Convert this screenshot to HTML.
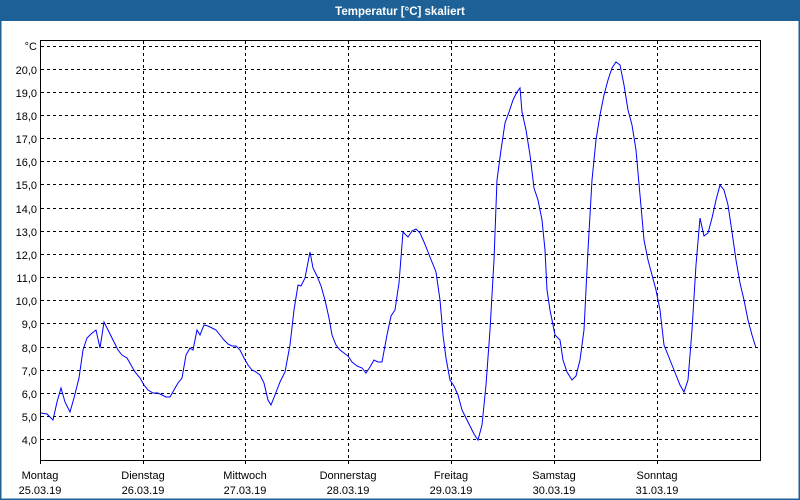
<!DOCTYPE html>
<html><head><meta charset="utf-8"><style>
body{margin:0;width:800px;height:500px;overflow:hidden;background:#fff;font-family:"Liberation Sans",sans-serif}
</style></head><body>
<svg width="800" height="500" xmlns="http://www.w3.org/2000/svg" style="display:block">
<rect x="0" y="0" width="800" height="500" fill="#fff"/>
<rect x="0" y="0" width="800" height="21" fill="#1d6196"/>
<rect x="0" y="0" width="1.5" height="500" fill="#1d6196"/>
<rect x="798.5" y="0" width="1.5" height="500" fill="#1d6196"/>
<rect x="0" y="498.5" width="800" height="1.5" fill="#1d6196"/>
<text x="400" y="15" fill="#fff" font-size="11.5" font-weight="bold" text-anchor="middle">Temperatur [°C] skaliert</text>
<g stroke="#000" stroke-width="1" stroke-dasharray="3,3" shape-rendering="crispEdges">
<line x1="41" x2="760" y1="46.5" y2="46.5"/>
<line x1="41" x2="760" y1="69.5" y2="69.5"/>
<line x1="41" x2="760" y1="92.5" y2="92.5"/>
<line x1="41" x2="760" y1="115.5" y2="115.5"/>
<line x1="41" x2="760" y1="138.5" y2="138.5"/>
<line x1="41" x2="760" y1="161.5" y2="161.5"/>
<line x1="41" x2="760" y1="184.5" y2="184.5"/>
<line x1="41" x2="760" y1="208.5" y2="208.5"/>
<line x1="41" x2="760" y1="231.5" y2="231.5"/>
<line x1="41" x2="760" y1="254.5" y2="254.5"/>
<line x1="41" x2="760" y1="277.5" y2="277.5"/>
<line x1="41" x2="760" y1="300.5" y2="300.5"/>
<line x1="41" x2="760" y1="323.5" y2="323.5"/>
<line x1="41" x2="760" y1="347.5" y2="347.5"/>
<line x1="41" x2="760" y1="370.5" y2="370.5"/>
<line x1="41" x2="760" y1="393.5" y2="393.5"/>
<line x1="41" x2="760" y1="416.5" y2="416.5"/>
<line x1="41" x2="760" y1="439.5" y2="439.5"/>
<line y1="41" y2="464" x1="143.5" x2="143.5"/>
<line y1="41" y2="464" x1="245.5" x2="245.5"/>
<line y1="41" y2="464" x1="348.5" x2="348.5"/>
<line y1="41" y2="464" x1="451.5" x2="451.5"/>
<line y1="41" y2="464" x1="554.5" x2="554.5"/>
<line y1="41" y2="464" x1="657.5" x2="657.5"/>
</g>
<rect x="40.5" y="40.5" width="720" height="420" fill="none" stroke="#000" shape-rendering="crispEdges"/>
<line x1="40.5" x2="40.5" y1="460" y2="464" stroke="#000" shape-rendering="crispEdges"/>
<g font-size="11" fill="#000" text-anchor="end">
<text x="37" y="50">°C</text>
<text x="37" y="74">20,0</text><text x="37" y="97">19,0</text><text x="37" y="120">18,0</text>
<text x="37" y="143">17,0</text><text x="37" y="166">16,0</text><text x="37" y="189">15,0</text>
<text x="37" y="213">14,0</text><text x="37" y="236">13,0</text><text x="37" y="259">12,0</text>
<text x="37" y="282">11,0</text><text x="37" y="305">10,0</text><text x="37" y="328">9,0</text>
<text x="37" y="352">8,0</text><text x="37" y="375">7,0</text><text x="37" y="398">6,0</text>
<text x="37" y="421">5,0</text><text x="37" y="444">4,0</text>
</g>
<g font-size="11" fill="#000" text-anchor="middle">
<text x="40" y="479">Montag</text><text x="40" y="494">25.03.19</text>
<text x="143" y="479">Dienstag</text><text x="143" y="494">26.03.19</text>
<text x="245" y="479">Mittwoch</text><text x="245" y="494">27.03.19</text>
<text x="348" y="479">Donnerstag</text><text x="348" y="494">28.03.19</text>
<text x="451" y="479">Freitag</text><text x="451" y="494">29.03.19</text>
<text x="554" y="479">Samstag</text><text x="554" y="494">30.03.19</text>
<text x="657" y="479">Sonntag</text><text x="657" y="494">31.03.19</text>
</g>
<polyline fill="none" stroke="#0000ff" stroke-width="1" points="41,413 47,414 53,420 57,402 61,388 65,402 70,412 74,398 79,378 83,350 87,338 91,334 96,330 100,348 104,322 108,330 113,340 118,350 122,355 127,358 131,365 135,372 140,378 144,385 148,390 153,393 158,393 162,395 166,397 170,397 174,390 178,383 182,378 186,355 190,348 193,350 197,330 200,335 204,325 208,326 212,328 216,330 220,335 224,340 228,344 232,346 236,346 240,350 244,358 248,365 252,370 256,372 260,375 264,383 268,400 271,405 275,395 280,382 285,372 290,345 294,310 298,285 301,286 305,278 310,252 313,268 317,276 321,286 325,300 329,318 332,335 336,345 340,350 344,353 348,356 352,362 357,366 362,368 366,373 370,367 374,360 378,362 382,362 387,335 391,316 395,310 399,283 403,232 408,237 412,231 416,229 420,233 424,242 428,252 432,262 436,272 440,300 443,335 446,358 450,380 454,386 458,395 462,410 466,418 470,426 474,434 478,440 482,425 486,385 490,330 494,260 497,180 501,150 505,123 509,112 513,100 517,92 520,88 522,112 526,130 530,155 534,188 538,200 542,220 545,250 547,290 550,310 555,335 560,340 563,360 567,372 572,380 576,376 580,360 584,330 588,250 592,180 596,140 600,115 604,95 608,80 612,68 616,62 620,65 624,85 628,110 632,125 636,150 640,195 644,240 648,260 652,275 656,290 660,310 664,345 668,355 672,365 676,375 680,385 684,392 688,380 692,330 696,265 700,218 704,236 708,233 712,218 716,200 720,185 724,190 728,205 732,232 736,260 740,283 744,300 748,320 752,335 756,348"/>
</svg>
</body></html>
